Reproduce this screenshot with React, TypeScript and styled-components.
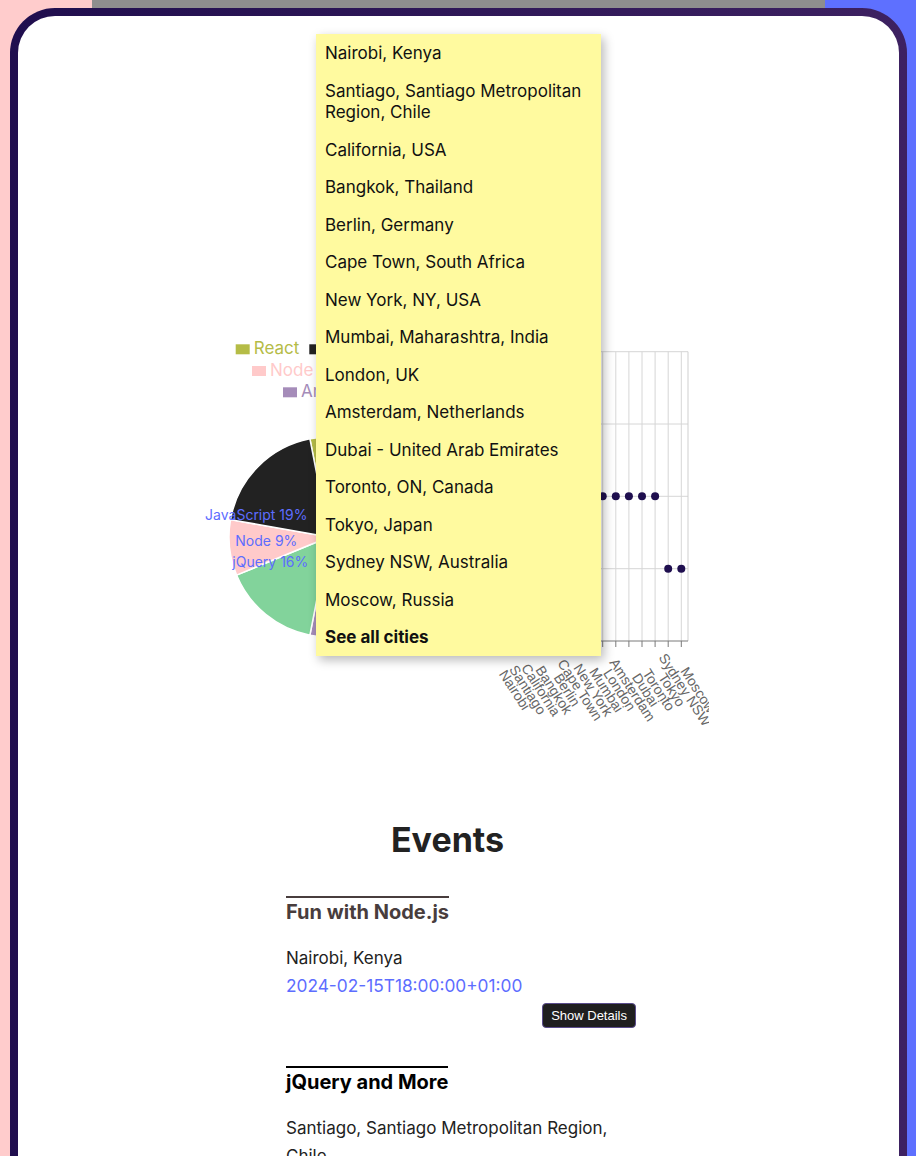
import React from 'react';
import styled, { createGlobalStyle } from 'styled-components';

const GlobalStyle = createGlobalStyle`
  html, body {
    margin: 0;
    padding: 0;
  }
  body {
    background: linear-gradient(to right, #ffcccc 0 50%, #5e70ff 50% 100%);
    font-family: "Inter", "Noto Sans", sans-serif;
    color: #222;
    overflow: hidden;
  }
`;

const cities = [
  'Nairobi, Kenya',
  'Santiago, Santiago Metropolitan Region, Chile',
  'California, USA',
  'Bangkok, Thailand',
  'Berlin, Germany',
  'Cape Town, South Africa',
  'New York, NY, USA',
  'Mumbai, Maharashtra, India',
  'London, UK',
  'Amsterdam, Netherlands',
  'Dubai - United Arab Emirates',
  'Toronto, ON, Canada',
  'Tokyo, Japan',
  'Sydney NSW, Australia',
  'Moscow, Russia',
];

const tickLabels = [
  'Nairobi', 'Santiago', 'California', 'Bangkok', 'Berlin', 'Cape Town', 'New York',
  'Mumbai', 'London', 'Amsterdam', 'Dubai', 'Toronto', 'Tokyo', 'Sydney NSW', 'Moscow',
];

// dots: [tick index, row index]
const points: [number, number][] = [
  [8, 2], [9, 2], [10, 2], [11, 2], [12, 2],
  [13, 3], [14, 3],
];

const slices = [
  { label: 'React', color: '#b5bc46', from: -11, to: 62 },
  { label: 'Vue', color: '#8fb8e8', from: 62, to: 110 },
  { label: 'Angular', color: '#a58cb9', from: 110, to: 191 },
  { label: 'jQuery', color: '#82d39b', from: 191, to: 247.6 },
  { label: 'Node', color: '#ffcaca', from: 247.6, to: 280 },
  { label: 'JavaScript', color: '#222222', from: 280, to: 349 },
];

const events = [
  {
    title: 'Fun with Node.js',
    location: 'Nairobi, Kenya',
    start: '2024-02-15T18:00:00+01:00',
    muted: true,
  },
  {
    title: 'jQuery and More',
    location: 'Santiago, Santiago Metropolitan Region, Chile',
    start: '2024-03-02T19:30:00+01:00',
    muted: false,
  },
  {
    title: 'React Meetup',
    location: 'California, USA',
    start: '2024-03-20T17:00:00+01:00',
    muted: false,
  },
];

const Page = styled.div`
  min-height: 1156px;
`;

const TopStrip = styled.div`
  width: 733px;
  height: 8px;
  margin-left: 92px;
  background: #8e8e8e;
`;

const Frame = styled.div`
  width: 897px;
  margin-left: 10px;
  box-sizing: border-box;
  padding: 8px 8px 0;
  border-radius: 45px 45px 0 0;
  background: linear-gradient(to right, #200e4e, #3d2161);
`;

const Panel = styled.main`
  position: relative;
  background: #fff;
  border-radius: 37px 37px 0 0;
  padding-bottom: 80px;
`;

const CityMenu = styled.ul`
  position: absolute;
  top: 18px;
  left: 298px;
  width: 285px;
  margin: 0;
  padding: 0;
  list-style: none;
  background: #fffa9f;
  box-shadow: 3px 4px 10px rgba(0, 0, 0, 0.28);
  z-index: 2;
`;

const CityItem = styled.li<{ $bold?: boolean }>`
  padding: 9px 10px 7px 9px;
  font-size: 17px;
  line-height: 21.5px;
  color: #111;
  font-weight: ${(p) => (p.$bold ? 700 : 400)};
`;

const ChartsRow = styled.section`
  display: flex;
  align-items: flex-start;
  gap: 10px;
  padding: 314px 0 0 182px;
`;

const ChartSvg = styled.svg`
  display: block;
  flex: none;
  overflow: hidden;
`;

const EventsSection = styled.section`
  padding: 0 32px 0 10px;
  margin-top: 79px;
`;

const Heading = styled.h1`
  margin: 0;
  text-align: center;
  font-size: 34px;
  font-weight: 700;
  line-height: normal;
  color: #222;
`;

const EventList = styled.div`
  display: flex;
  flex-direction: column;
  align-items: center;
  gap: 38px;
  margin-top: 36px;
  padding-left: 27px;
`;

const Card = styled.article`
  width: 350px;
`;

const Title = styled.h2<{ $muted?: boolean }>`
  display: inline-block;
  margin: 0;
  padding-top: 2px;
  font-size: 20px;
  font-weight: 700;
  line-height: normal;
  color: ${(p) => (p.$muted ? '#483d3d' : '#000')};
  border-top: 2px solid currentColor;
`;

const Location = styled.div`
  margin-top: 20px;
  font-size: 17px;
  line-height: 28px;
  color: #222;
`;

const Start = styled.div`
  font-size: 17.3px;
  line-height: 28px;
  color: #5d6dff;
`;

const Actions = styled.div`
  display: flex;
  justify-content: flex-end;
  margin-top: 2.5px;
`;

const DetailsButton = styled.button`
  font-family: "Liberation Sans", Arial, sans-serif;
  font-size: 13px;
  line-height: 15px;
  padding: 4px 8px;
  color: #fff;
  background: #1f1f1f;
  border: 1px solid #5a4c8c;
  border-radius: 4px;
  cursor: pointer;
`;

const PieChart = () => {
  const cx = 129;
  const cy = 207;
  const r = 100;
  const pt = (a: number) => {
    const rad = (a * Math.PI) / 180;
    return `${cx + r * Math.sin(rad)} ${cy - r * Math.cos(rad)}`;
  };
  const arc = (a0: number, a1: number) =>
    `M ${cx} ${cy} L ${pt(a0)} A ${r} ${r} 0 ${a1 - a0 > 180 ? 1 : 0} 1 ${pt(a1)} Z`;

  const legend = [
    { label: 'React', color: '#b5bc46', x: 35.7, y: 24.3 },
    { label: 'JavaScript', color: '#222222', x: 109.3, y: 24.3 },
    { label: 'Node', color: '#ffcaca', x: 52, y: 46 },
    { label: 'jQuery', color: '#82d39b', x: 125, y: 46 },
    { label: 'Angular', color: '#a58cb9', x: 83, y: 67.3 },
    { label: 'Vue', color: '#8fb8e8', x: 165, y: 67.3 },
  ];

  return (
    <ChartSvg width={260} height={320} viewBox="0 0 260 320">
      {legend.map((l) => (
        <g key={l.label}>
          <rect x={l.x} y={l.y - 10} width={14} height={10} fill={l.color} />
          <text x={l.x + 18} y={l.y} fontSize={17} fill={l.color} fontFamily="Inter, sans-serif">
            {l.label}
          </text>
        </g>
      ))}
      {slices.map((s) => (
        <path key={s.label} d={arc(s.from, s.to)} fill={s.color} stroke="#fff" strokeWidth={1.5} />
      ))}
      <g fontSize={14} fill="#5d6dff" fontFamily="Inter, sans-serif" textAnchor="middle">
        <text x={56.3} y={190}>JavaScript 19%</text>
        <text x={66.3} y={216}>Node 9%</text>
        <text x={70.3} y={236.7}>jQuery 16%</text>
      </g>
    </ChartSvg>
  );
};

const CityScatter = () => {
  const tickX = (i: number) => 27.9 + 13.1 * i;
  const rows = [21.7, 94, 166.3, 238.7, 311];
  const left = 20;
  const right = 218;
  return (
    <ChartSvg width={239} height={410} viewBox="0 0 239 410">
      {rows.slice(0, 4).map((y) => (
        <line key={y} x1={left} x2={right} y1={y} y2={y} stroke="#d6d6d6" strokeWidth={1} />
      ))}
      {tickLabels.map((_, i) => (
        <line key={i} x1={tickX(i)} x2={tickX(i)} y1={21.7} y2={311} stroke="#d6d6d6" strokeWidth={1} />
      ))}
      <line x1={right} x2={right} y1={21.7} y2={311} stroke="#cfcfcf" strokeWidth={1} />
      <line x1={left} x2={right} y1={311} y2={311} stroke="#7a7a7a" strokeWidth={1} />
      {tickLabels.map((_, i) => (
        <line key={`t${i}`} x1={tickX(i)} x2={tickX(i)} y1={311} y2={317} stroke="#7a7a7a" strokeWidth={1} />
      ))}
      {points.map(([i, row]) => (
        <circle key={`${i}-${row}`} cx={tickX(i)} cy={rows[row]} r={4} fill="#1f0f4f" />
      ))}
      <g fontSize={14} fill="#666" fontFamily="'Liberation Sans', Arial, sans-serif" textAnchor="middle">
        {tickLabels.map((label, i) => {
          const x = tickX(i) + 15.8;
          const y = 360.5;
          return (
            <text key={label} x={x} y={y} dominantBaseline="middle" transform={`rotate(57 ${x} ${y})`}>
              {label}
            </text>
          );
        })}
      </g>
    </ChartSvg>
  );
};

const EventCard = ({ title, location, start, muted }: (typeof events)[number]) => (
  <Card>
    <div>
      <Title $muted={muted}>{title}</Title>
    </div>
    <Location>{location}</Location>
    <Start>{start}</Start>
    <Actions>
      <DetailsButton>Show Details</DetailsButton>
    </Actions>
  </Card>
);

export default function App() {
  return (
    <Page>
      <GlobalStyle />
      <TopStrip />
      <Frame>
        <Panel>
          <CityMenu>
            {cities.map((c) => (
              <CityItem key={c}>{c}</CityItem>
            ))}
            <CityItem $bold>See all cities</CityItem>
          </CityMenu>
          <ChartsRow>
            <PieChart />
            <CityScatter />
          </ChartsRow>
          <EventsSection>
            <Heading>Events</Heading>
            <EventList>
              {events.map((e) => (
                <EventCard key={e.title} {...e} />
              ))}
            </EventList>
          </EventsSection>
        </Panel>
      </Frame>
    </Page>
  );
}
